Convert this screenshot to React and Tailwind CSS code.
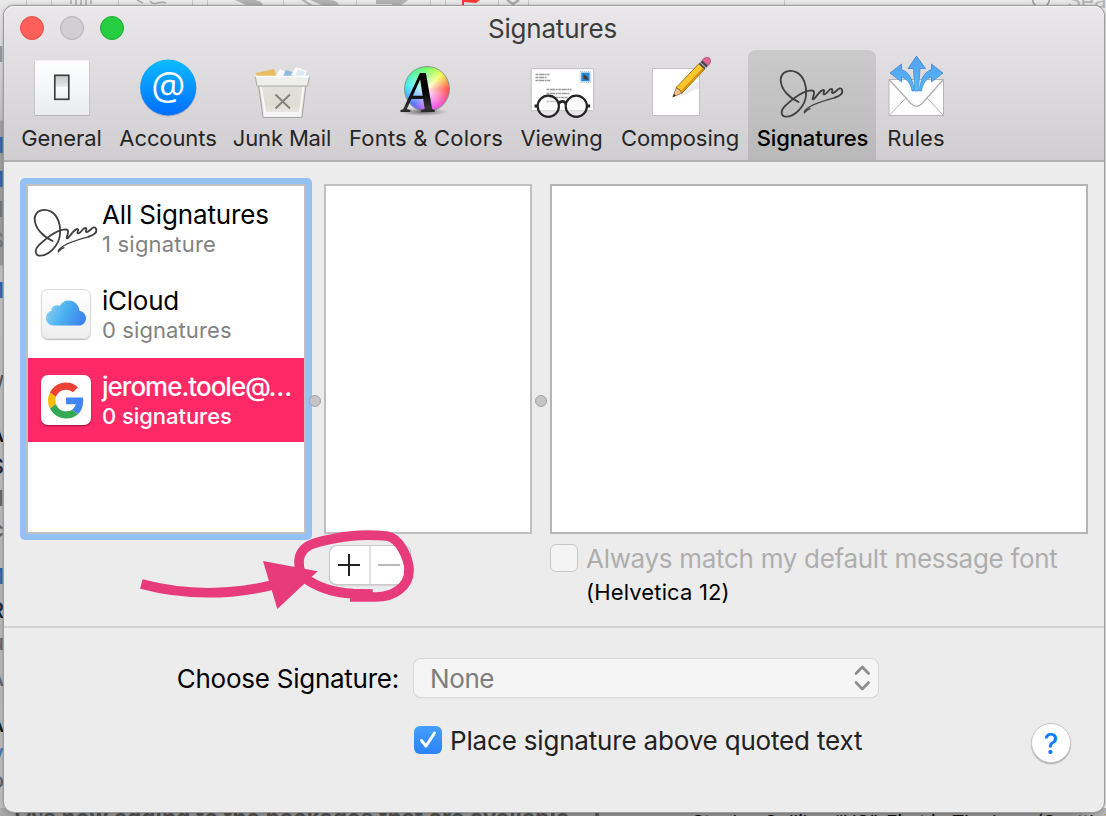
import React from "react";

function SignatureMark({ className }) {
  return (
    <svg className={className} width="70" height="54" viewBox="0 0 210 162" fill="none" stroke="#404040" strokeWidth="5.500" strokeLinecap="round" strokeLinejoin="round">
      <path d="M68 105 C42 94 14 68 14 38 C16 12 42 7 62 16 C84 28 93 58 90 84 C88 120 54 149 31 149 C13 149 14 130 26 118 C48 97 82 70 108 70 C124 72 104 98 112 97 C120 93 130 70 142 69 C150 70 136 84 146 82 C154 80 158 65 167 66 C174 68 162 80 172 78 C182 74 192 56 198 68 C203 80 190 88 176 92" />
      <path strokeWidth="4.200" d="M178 92 C140 102 92 118 85 134 M85 137 C90 132 96 127 102 125" />
    </svg>
  );
}

function GeneralIcon() {
  return (
    <svg width="76" height="70" viewBox="24 54 76 70">
      <defs>
        <linearGradient id="plate" x1="0" y1="0" x2="0" y2="1"><stop stopColor="#fff" /><stop offset="1" stopColor="#e9edf0" /></linearGradient>
        <linearGradient id="switch" x1="0" y1="0" x2="0" y2="1"><stop stopColor="#c9c9c9" /><stop offset=".45" stopColor="#e4e4e4" /><stop offset=".5" stopColor="#fbfbfb" /><stop offset="1" stopColor="#eee" /></linearGradient>
      </defs>
      <rect x="34.5" y="61" width="55" height="55" rx="1" fill="#b4b6b8" />
      <rect x="35" y="60.5" width="54" height="54.5" rx="1" fill="url(#plate)" />
      <rect x="54.8" y="75.3" width="14" height="24" fill="url(#switch)" stroke="#3f3f3f" strokeWidth="1.700" />
    </svg>
  );
}

function AccountsIcon() {
  return (
    <svg width="76" height="70" viewBox="130 54 76 70">
      <defs>
        <linearGradient id="acct" x1="0" y1="0" x2="0" y2="1"><stop stopColor="#0cbcff" /><stop offset="1" stopColor="#006cff" /></linearGradient>
      </defs>
      <circle cx="168.300" cy="88.300" r="28.300" fill="#8b98ab" opacity=".55" />
      <circle cx="168.200" cy="87.500" r="28" fill="url(#acct)" />
      <text x="168.300" y="99.600" textAnchor="middle" fontFamily="Open Sans, sans-serif" fontSize="38" fill="#fff">@</text>
    </svg>
  );
}

function JunkIcon() {
  return (
    <svg width="76" height="70" viewBox="245 54 76 70">
      <defs>
        <linearGradient id="bin" x1="0" y1="0" x2="0" y2="1"><stop stopColor="#e2e1de" /><stop offset=".6" stopColor="#dfdcd2" /><stop offset="1" stopColor="#efefef" /></linearGradient>
      </defs>
      <path d="M256 73 L274 69 L277 77 L257 78Z" fill="#e8bd62" />
      <path d="M275 77 L280 69 L289 74 L286 78Z" fill="#fafafa" />
      <path d="M283 76 L286 70 L295 73 L292 78Z" fill="#8cbbe2" />
      <path d="M291 75 L296 67 L307 71 L304 78Z" fill="#fbfdfe" />
      <path d="M298 69 L305 72 L303 77 L295 76Z" fill="#dcebf4" />
      <path d="M258.500 85 L306 85 L302 117.500 L263 117.500Z" fill="url(#bin)" stroke="#a5a5a5" strokeWidth="1" />
      <path d="M261 87 L265.500 115 M303.500 87 L299.500 115" stroke="#fff" strokeWidth="2" opacity=".8" />
      <path d="M264 112 H301 L300.500 116.500 H264Z" fill="#f5f5f5" />
      <path d="M255.300 76.500 H309.500 L307.500 86 H257Z" fill="#eeeeec" stroke="#a8a8a8" strokeWidth="1" />
      <path d="M255.500 76.500 H309.500" stroke="#fff" strokeWidth="1.600" />
      <path d="M275.500 94.500 L290 108.500 M290 94.500 L275.500 108.500" stroke="#85837e" strokeWidth="2" />
    </svg>
  );
}

function FontsIcon() {
  return (
    <svg width="76" height="70" viewBox="388 54 76 70">
      <defs>
        <radialGradient id="ground"><stop stopColor="#333" stopOpacity=".7" /><stop offset="1" stopColor="#555" stopOpacity="0" /></radialGradient>
        <linearGradient id="ink" x1="0" y1="0" x2="0" y2="1"><stop offset=".5" stopColor="#000" /><stop offset=".75" stopColor="#353535" /><stop offset="1" stopColor="#000" /></linearGradient>
      </defs>
      <foreignObject x="404" y="65.500" width="46" height="46">
        <div className="h-[46px] w-[46px] rounded-full border border-[#7f9a86] bg-[radial-gradient(circle,#ffffffee_0%,#ffffff00_72%),conic-gradient(#6bfa5a_0deg,#f4fb4a_45deg,#ff4a3c_90deg,#fb4ad0_140deg,#c95aff_185deg,#4a68ff_220deg,#37e9f5_280deg,#49f59a_320deg,#6bfa5a_360deg)]" />
      </foreignObject>
      <ellipse cx="423" cy="112" rx="25" ry="4" fill="url(#ground)" />
      <text transform="translate(403 111.500) scale(.85 1)" x="0" y="0" fontFamily="Liberation Serif, serif" fontWeight="700" fontStyle="italic" fontSize="60" fill="url(#ink)">A</text>
    </svg>
  );
}

function ViewingIcon() {
  return (
    <svg width="76" height="70" viewBox="523.500 54 76 70">
      <defs>
        <linearGradient id="lens" x1="0" y1="0" x2="0" y2="1"><stop stopColor="#eee" stopOpacity=".5" /><stop offset="1" stopColor="#fff" stopOpacity=".45" /></linearGradient>
      </defs>
      <rect x="530.700" y="68.700" width="62.500" height="42" rx="1" fill="#fff" stroke="#bdbdbd" strokeWidth="1" />
      <g stroke="#999" strokeWidth="1.300" strokeDasharray="3 .6 5 .5 2 .6">
        <path d="M535 74.500H549M535 77.500H546M535 80.500H550" />
        <path d="M546 89.500H571M546 93.500H569M549 97.500H567M546 101.500H560" strokeWidth="1.700" />
      </g>
      <rect x="579.500" y="71.500" width="11" height="11" fill="#d8ecf7" stroke="#aaa" strokeDasharray="1 1" strokeWidth=".6" />
      <rect x="580.800" y="72.700" width="8.300" height="8.500" fill="#2788d9" />
      <path d="M583 74L587 77L588 80L583 79Z" fill="#443b3a" />
      <g fill="url(#lens)" stroke="#242424" strokeWidth="2.200">
        <circle cx="547.800" cy="106.200" r="10.600" />
        <circle cx="575.800" cy="106.200" r="10.600" />
        <path fill="none" d="M558 104 C560 100.500 564 100.500 565.500 104" strokeWidth="2.600" />
        <path d="M534 106H537.500M586.300 106H589.700" strokeWidth="3" />
      </g>
    </svg>
  );
}

function ComposingIcon() {
  return (
    <svg width="76" height="70" viewBox="642 54 76 70">
      <rect x="652.500" y="68.500" width="47" height="47" fill="#fff" stroke="#c3c3c3" />
      <path d="M675 97 L699 81 L699 88 L683 95Z" fill="#e5e5e5" opacity=".7" />
      <g transform="translate(672.800 97) rotate(-46.500)">
        <path d="M0 0 L10 -4.200 L10 4.200Z" fill="#e9c193" stroke="#8b5f28" strokeWidth=".7" />
        <path d="M0 0 L3 -1.200 L3 1.200Z" fill="#222" />
        <path d="M9 -4 H42 V4 H9 Q11 0 9 -4Z" fill="#fcc72a" stroke="#87601a" strokeWidth=".8" />
        <path d="M10 2.800 H42" stroke="#d88e0c" strokeWidth="2" />
        <rect x="42" y="-4" width="5" height="8" fill="#44484b" />
        <path d="M44 -4 V4" stroke="#b9bdc0" strokeWidth="1" />
        <path d="M47 -4 H49.500 Q53.500 -3 53.500 0 Q53.500 3 49.500 4 H47Z" fill="#e1688e" stroke="#8e3553" strokeWidth=".5" />
      </g>
    </svg>
  );
}

function SignaturesIcon() {
  return (
    <div className="h-[70px] w-[72px] pt-[13px]">
      <SignatureMark />
    </div>
  );
}

function RulesIcon() {
  return (
    <svg width="76" height="70" viewBox="878 54 76 70">
      <defs>
        <linearGradient id="arrow" x1="0" y1="0" x2="0" y2="1"><stop stopColor="#53a3ee" /><stop offset="1" stopColor="#57bafd" /></linearGradient>
      </defs>
      <rect x="889" y="79.500" width="54.500" height="36" fill="#fff" stroke="#b5b5b5" />
      <path d="M889.500 115 L906 98 M943 115 L927 98" stroke="#adadad" fill="none" />
      <path d="M889.500 80 L911 103.500 Q916.500 109 922 103.500 L943 80" fill="#fff" stroke="#b1b1b1" strokeWidth="1.400" />
      <g fill="url(#arrow)" stroke="#3b80c7" strokeWidth=".7" strokeLinejoin="round">
        <path d="M914.700 91 L913.500 68.500 H908 L916.500 56 L925.500 68.500 H920 L918.500 91Z" />
        <path d="M890 73 L901.500 64 V69.500 C909 72 913.500 80 914 91 H912 C911 84 907 78.500 901.500 77 V82Z" />
        <path d="M943 73 L931.500 64 V69.500 C924 72 920 80 919.500 91 H921.500 C922.500 84 926 78.500 931.500 77 V82Z" />
      </g>
    </svg>
  );
}

const TABS = [
  { label: "General", Icon: GeneralIcon, width: "w-[98px]", tracking: "pr-[1px] tracking-[-0.05px]" },
  { label: "Accounts", Icon: AccountsIcon, width: "w-[114px]", tracking: "tracking-[-0.1px]" },
  { label: "Junk Mail", Icon: JunkIcon, width: "w-[116px]", tracking: "pr-[2px] tracking-[-0.15px]" },
  { label: "Fonts & Colors", Icon: FontsIcon, width: "w-[170px]", tracking: "tracking-[0.2px]" },
  { label: "Viewing", Icon: ViewingIcon, width: "w-[101px]", tracking: "tracking-[-0.1px]" },
  { label: "Composing", Icon: ComposingIcon, width: "w-[136px]", tracking: "tracking-[-0.05px]" },
  { label: "Signatures", Icon: SignaturesIcon, width: "w-[128px]", tracking: "pl-[1px] tracking-[-0.1px]", active: true },
  { label: "Rules", Icon: RulesIcon, width: "w-[80px]", tracking: "tracking-[0.1px]" },
];

function Toolbar() {
  return (
    <nav className="flex h-[110px] pl-[9px]">
      {TABS.map(({ label, Icon, width, tracking, active }) => (
        <div
          key={label}
          className={`${width} flex shrink-0 flex-col items-center pt-1 ${active ? "rounded-t-lg bg-linear-to-b from-[#cacaca] to-[#b9b9b9] font-medium text-black" : "text-[#262626]"}`}
        >
          <Icon />
          <span className={`${tracking} text-[22px] leading-[28px] whitespace-nowrap`}>{label}</span>
        </div>
      ))}
    </nav>
  );
}

function CloudIcon() {
  return (
    <div className="mt-[17px] ml-[13px] flex h-[50px] w-[50px] items-center justify-center rounded-[7px] border border-[#dcdcdc] bg-linear-to-b from-white to-[#eeeeee] shadow-[0_1px_1px_#bbb]">
      <svg width="40" height="26" viewBox="0 0 40 26" className="-mt-[3px]">
        <defs>
          <linearGradient id="cloud" x1="0" y1=".3" x2="1" y2=".6"><stop stopColor="#8ed0ef" /><stop offset=".45" stopColor="#4db2f1" /><stop offset="1" stopColor="#3b82ec" /></linearGradient>
        </defs>
        <path fill="url(#cloud)" d="M8 25.500 C3 25.500 0 22 0 18 C0 14.500 2.500 11.500 5.500 10.800 C5.500 7.500 8 5.300 11 5.300 C12 5.300 12.700 5.500 13.500 6 C15.500 2.500 18.700 .5 22.800 .5 C28.500 .5 33 4.800 33.500 10.800 C37.300 11.700 40 14.700 40 18.200 C40 22.300 37 25.500 32.500 25.500Z" />
      </svg>
    </div>
  );
}

function GoogleIcon() {
  return (
    <div className="mt-[17px] ml-[13px] flex h-[50px] w-[50px] items-center justify-center rounded-[7px] bg-white shadow-[0_1px_2px_rgba(80,0,20,0.6)]">
      <svg width="36" height="37" viewBox="0 0 48 48">
        <path fill="#EA4335" d="M24 9.500c3.540 0 6.710 1.220 9.210 3.600l6.850-6.850C35.900 2.380 30.470 0 24 0 14.620 0 6.510 5.380 2.560 13.220l7.980 6.190C12.430 13.720 17.740 9.500 24 9.500z" />
        <path fill="#4285F4" d="M46.980 24.550c0-1.570-.15-3.090-.38-4.550H24v9.020h12.940c-.58 2.960-2.260 5.480-4.780 7.180l7.730 6c4.510-4.180 7.090-10.360 7.090-17.650z" />
        <path fill="#FBBC05" d="M10.530 28.590c-.48-1.450-.76-2.990-.76-4.590s.27-3.140.76-4.590l-7.980-6.190C.92 16.460 0 20.120 0 24c0 3.880.92 7.540 2.560 10.780l7.970-6.190z" />
        <path fill="#34A853" d="M24 48c6.480 0 11.930-2.130 15.890-5.810l-7.730-6c-2.150 1.450-4.920 2.300-8.160 2.300-6.260 0-11.570-4.220-13.470-9.910l-7.980 6.190C6.510 42.620 14.620 48 24 48z" />
      </svg>
    </div>
  );
}

function AccountRow({ icon, name, count, selected, nameTracking, countTracking }) {
  return (
    <li className={`flex h-[84px] ${selected ? "bg-[#ff2968] font-medium text-white" : "text-black"}`}>
      <div className="w-[74px] shrink-0">{icon}</div>
      <div className="pt-[13px] whitespace-nowrap">
        <div className={`${nameTracking} text-[26px] leading-[31px]`}>{name}</div>
        <div className={`${countTracking} text-[22px] leading-[28px] ${selected ? "" : "text-[#828282]"}`}>{count}</div>
      </div>
    </li>
  );
}

function SplitHandle() {
  return (
    <div className="relative z-10 flex w-[18px] shrink-0 justify-center pt-[211px]">
      <span className="h-3 w-3 rounded-full border border-[#a4a4a4] bg-[#c4c4c4]" />
    </div>
  );
}

function Annotation() {
  return (
    <svg className="pointer-events-none absolute top-[520px] left-[120px] z-20" width="320" height="100" viewBox="0 0 960 300" fill="none" stroke="#e83b7b">
      <path strokeWidth="29" d="M758 222 L700 221 C640 218 595 205 552 172 C540 160 537 145 537 125 C538 75 590 65 640 56 C700 43 750 43 800 48 C842 54 867 120 867 150 C868 200 820 232 765 231 L690 231" />
      <path strokeWidth="29" d="M64 192 C200 228 340 225 470 192" />
      <path fill="#e83b7b" stroke="none" d="M429 123 L593 154 L472 267Z" />
    </svg>
  );
}

const EDGE_TEXT = [
  ["top-[40px]", "H", "text-[#9a9a9a]"],
  ["top-[131px]", "M", "text-[#2f65ad]"],
  ["top-[165px]", "M", "text-[#2f65ad]"],
  ["top-[195px]", "H", "text-[#777]"],
  ["top-[226px]", "S", "text-[#777]"],
  ["top-[276px]", "M", "text-[#2f65ad]"],
  ["top-[370px]", "/", "text-[#555]"],
  ["top-[420px]", "A", "text-[#181818]"],
  ["top-[452px]", "S", "text-[#1b2740]"],
  ["top-[484px]", "H", "text-[#6c6761]"],
  ["top-[515px]", "c", "text-[#6c6761]"],
  ["top-[562px]", "M", "text-[#2f65ad]"],
  ["top-[596px]", "R", "text-[#1b2740]"],
  ["top-[628px]", "u", "text-[#6c6761]"],
  ["top-[664px]", "A", "text-[#5f6670]"],
  ["top-[710px]", "A", "text-[#181818]"],
  ["top-[738px]", "v", "text-[#4279b5]"],
  ["top-[766px]", "o", "text-[#5f6670]"],
];

function MailBehind() {
  return (
    <div className="absolute inset-0 overflow-hidden bg-[#e9e9e9]">
      <svg className="absolute top-0 left-0" width="1106" height="8" viewBox="0 0 1106 8" fill="none">
        <path stroke="#c6c6c6" d="M26.500 0V8M51.500 0V8M118.500 0V8M192.500 0V8M207.500 0V8M283.500 0V8M356.500 0V8M430.500 0V8M445.500 0V8M498.500 0V8M528.500 0V8M784.500 0V8" />
        <path stroke="#aaa" strokeWidth="1.500" d="M71 0V4M76 0V8M81 0V8M86 0V8M91 0V4M137 0L143 3M150 1C155 7 158 0 166 3" />
        <path fill="#b3b3b3" d="M235 0H253C260 0 263 3 263 6H248ZM301 0H305L314 6H310ZM310 0H329C336 0 339 3 339 6H324ZM376 0H408L400 6H392V4H376Z" />
        <path fill="#fa3b30" d="M462 0H480L476 3L464 2V6H462Z" />
        <path stroke="#aaa" strokeWidth="2.500" d="M507 0L513 4L519 0" />
        <circle cx="1041" cy="-1" r="8.500" stroke="#999" strokeWidth="1.500" />
      </svg>
      <span className="absolute -top-[13px] left-[1067px] text-[22px] leading-[26px] text-[#b5b5b5]">Search</span>
      <div className="absolute top-0 left-0 h-[816px] w-1 overflow-hidden bg-[linear-gradient(to_bottom,#e9e9e9_0px,#d2d2d2_80px,#c0c0c0_120px,#a3a3a3_121px,#9c9c9c_265px,#c3c3c3_266px,#b9b9b9_600px,#c0c0c0_816px)]">
        {EDGE_TEXT.map(([top, glyph, color]) => (
          <span key={top} className={`absolute right-0 text-[22px] leading-[28px] font-medium ${top} ${color}`}>{glyph}</span>
        ))}
      </div>
      <div className="absolute inset-x-0 top-[808px] h-2 overflow-hidden bg-[linear-gradient(to_right,#aaa_0,#8d8d8d_30px,#8d8d8d_1070px,#b5b5b5_1106px)]">
        <span className="absolute -top-[4px] left-[10px] text-[22px] leading-[26px] font-bold tracking-[0.4px] whitespace-nowrap text-[#4b4b4b]">TA&rsquo;s now adding to the packages that are available.&nbsp; &nbsp;I</span>
        <span className="absolute top-[2px] left-[692px] text-[19px] leading-[26px] whitespace-nowrap text-[#111]">Stanley Collilux &ldquo;US&rdquo;, First in The long (Seattle)</span>
      </div>
    </div>
  );
}

export default function App() {
  return (
    <div className="relative h-[816px] w-[1106px] overflow-hidden pt-[6px] pl-1 font-[Inter,sans-serif]">
      <MailBehind />
      <main className="relative h-[806px] w-[1100px] rounded-[10px] bg-[#ececec] shadow-[0_0_0_1px_#9d9d9d,0_0_5px_rgba(0,0,0,0.35)]">
        <header className="rounded-t-[10px] border-b-2 border-[#b3b1b3] bg-linear-to-b from-[#e9e7e9] to-[#d0ced0] shadow-[inset_0_1px_0_#f6f6f6]">
          <div className="grid h-11 grid-cols-3 items-center">
            <div className="flex gap-4 pl-4">
              <span className="h-6 w-6 rounded-full border border-[#e24b47] bg-[#ff5f58]" />
              <span className="h-6 w-6 rounded-full border border-[#b3b1b3] bg-[#d0ced0]" />
              <span className="h-6 w-6 rounded-full border border-[#1bac2d] bg-[#28ce41]" />
            </div>
            <h1 className="pt-[2px] pr-[3px] text-center text-[26px] leading-[40px] tracking-[-0.2px] text-[#3c3c3c]">Signatures</h1>
          </div>
          <Toolbar />
        </header>

        <section className="h-[464px] pt-[22px]">
          <div className="flex h-[350px] pl-[22px]">
            <div className="-my-[6px] -ml-[6px] w-[292px] shrink-0 rounded-[5px] bg-[#93c1f3] p-[6px]">
              <ul className="flex h-full flex-col gap-[2px] border-2 border-[#c0c0c0] bg-white">
                <AccountRow
                  icon={<div className="pt-[20px] pl-[2px]"><SignatureMark /></div>}
                  name="All Signatures"
                  count="1 signature"
                  nameTracking="tracking-[-0.15px]"
                  countTracking="tracking-[0.2px]"
                />
                <AccountRow icon={<CloudIcon />} name="iCloud" count="0 signatures" nameTracking="tracking-[-0.25px]" countTracking="tracking-[0.1px]" />
                <AccountRow icon={<GoogleIcon />} name="jerome.toole@&hellip;" count="0 signatures" selected nameTracking="tracking-[-1px]" countTracking="tracking-[-0.05px]" />
              </ul>
            </div>
            <div className="-ml-[6px] flex">
              <SplitHandle />
              <div className="w-[208px] shrink-0 border-2 border-[#c0c0c0] bg-white" />
              <SplitHandle />
              <div className="w-[538px] shrink-0 border-2 border-[#b5b5b5] bg-white" />
            </div>
          </div>

          <div className="flex items-start pt-[10px] pl-[326px]">
            <div className="mt-[1.500px] flex h-[38px] w-[80px] overflow-hidden rounded-[7px] bg-white shadow-[0_0_0_1px_#c9c9c9,0_1px_2px_#999]">
              <div className="flex w-[41px] items-center justify-center border-r-2 border-[#e3e3e3] pt-[1px] pr-[1px]">
                <svg width="22" height="22" viewBox="0 0 22 22" stroke="#222" strokeWidth="2"><path d="M0 11H22M11 0V22" /></svg>
              </div>
              <div className="flex w-[37px] items-center justify-center pt-[1px] pr-[2px]">
                <svg width="22" height="22" viewBox="0 0 22 22" stroke="#b9b9b9" strokeWidth="2"><path d="M0 11H22" /></svg>
              </div>
            </div>
            <span className="ml-[140px] h-7 w-7 rounded-[6px] border border-[#c8c8c8] bg-[#f4f4f4]" />
            <div className="pl-2 whitespace-nowrap">
              <div className="pt-[1px] text-[26px] leading-[28px] tracking-[-0.3px] text-[#aeaeae]">Always match my default message font</div>
              <div className="pt-[2px] text-[22px] leading-[34px] tracking-[0.15px] text-black">(Helvetica 12)</div>
            </div>
          </div>
        </section>

        <section className="border-t-2 border-[#d3d3d3] pt-[30px]">
          <div className="flex h-10 items-center">
            <div className="w-[395px] pt-[2px] text-right text-[26px] leading-[40px] tracking-[-0.25px] text-black">Choose Signature:</div>
            <div className="ml-[15px] flex h-[38px] w-[464px] items-center justify-between rounded-[7px] bg-[#f5f5f5] pr-[6px] pl-4 text-[26px] leading-[38px] tracking-[-0.4px] text-[#7d7d7d] shadow-[0_0_0_1px_#d8d8d8,0_1px_1px_0_#c0c0c0]">
              <span className="pt-[2px]">None</span>
              <svg width="20" height="28" viewBox="0 0 20 28" fill="none" stroke="#8c8c8c" strokeWidth="2.600" strokeLinecap="round" strokeLinejoin="round">
                <path d="M4 9.500L10.300 3L16.600 9.500M4 18.500L10.300 25L16.600 18.500" />
              </svg>
            </div>
          </div>
          <div className="mt-[25px] flex h-10 items-start pr-[33px] pl-[410px]">
            <span className="mt-[3px] flex h-7 w-7 items-center justify-center rounded-[6px] bg-linear-to-b from-[#459ffb] to-[#2a83f8]">
              <svg width="20" height="20" viewBox="0 0 20 20" fill="none" stroke="#fff" strokeWidth="3" strokeLinecap="round" strokeLinejoin="round">
                <path d="M3.500 10.500L8 16L16.500 3" />
              </svg>
            </span>
            <span className="pt-[1px] pl-2 text-[26px] leading-[34px] tracking-[-0.18px] whitespace-nowrap text-[#222]">Place signature above quoted text</span>
            <span className="ml-auto flex h-10 w-10 items-center justify-center rounded-full border border-[#c9c9c9] bg-white pt-[1px] text-[28px] font-medium text-[#0a7dff] shadow-[0_1px_1px_#aaa]">?</span>
          </div>
        </section>
      </main>
      <Annotation />
    </div>
  );
}
